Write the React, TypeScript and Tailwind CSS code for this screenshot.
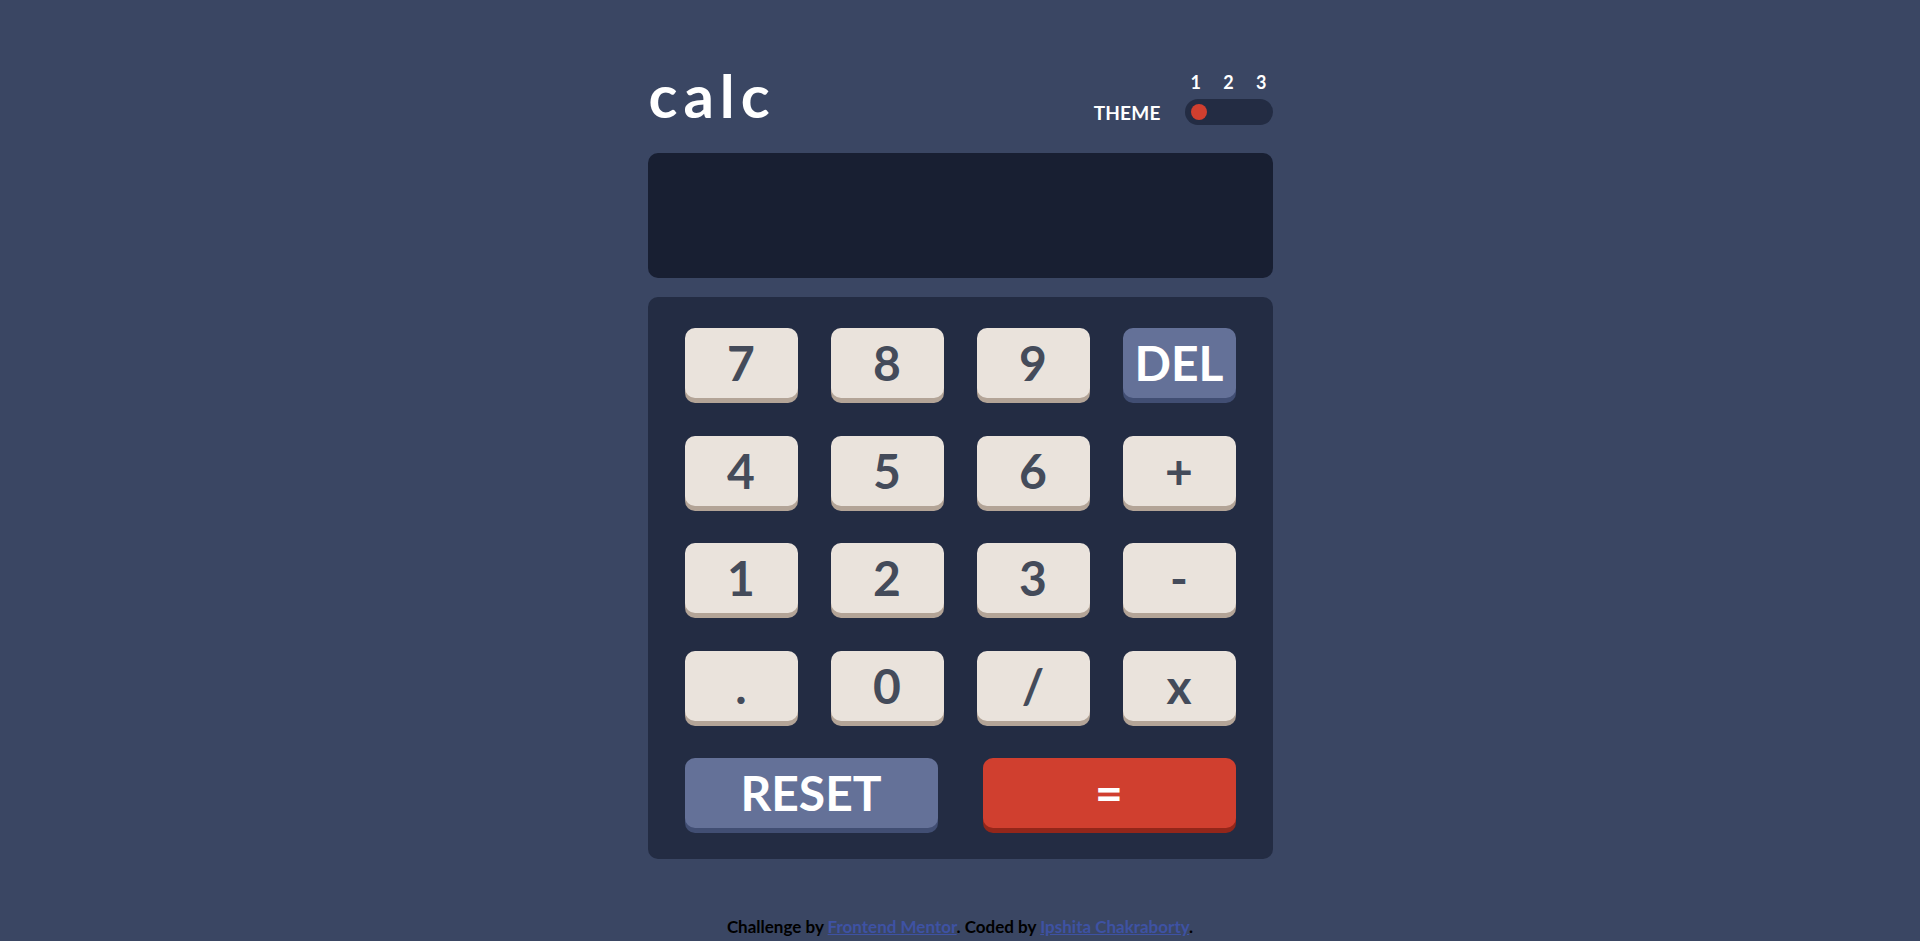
import { type ReactNode } from 'react';
import cx from 'clsx';

type Tone = 'plain' | 'muted' | 'accent';

const keys: { label: string; tone: Tone }[] = [
  { label: '7', tone: 'plain' },
  { label: '8', tone: 'plain' },
  { label: '9', tone: 'plain' },
  { label: 'DEL', tone: 'muted' },
  { label: '4', tone: 'plain' },
  { label: '5', tone: 'plain' },
  { label: '6', tone: 'plain' },
  { label: '+', tone: 'plain' },
  { label: '1', tone: 'plain' },
  { label: '2', tone: 'plain' },
  { label: '3', tone: 'plain' },
  { label: '-', tone: 'plain' },
  { label: '.', tone: 'plain' },
  { label: '0', tone: 'plain' },
  { label: '/', tone: 'plain' },
  { label: 'x', tone: 'plain' },
];

const toneClass: Record<Tone, string> = {
  plain: 'bg-[#eae3dc] text-[#444b5a] shadow-[0_5px_0_#b3a497]',
  muted: 'bg-[#647198] text-white shadow-[0_5px_0_#414e73]',
  accent: 'bg-[#d03f2f] text-white shadow-[0_5px_0_#93261a]',
};

const Key = ({ tone, children }: { tone: Tone; children: ReactNode }) => (
  <button
    type="button"
    className={cx(
      'flex h-[70px] items-center justify-center rounded-[10px] text-[48px] font-bold leading-none',
      toneClass[tone],
    )}
  >
    {children}
  </button>
);

const App = () => {
  return (
    <div className="flex min-h-screen flex-col items-center bg-[#3a4663] pt-[65px] font-['Lato','Noto_Sans',sans-serif]">
      <main className="w-[625px]">
        <header className="flex items-end justify-between">
          <h1 className="pl-[1px] text-[60px] font-bold leading-none tracking-[0.1em] text-white">
            calc
          </h1>

          <div className="flex items-end gap-[24px]">
            <span className="mb-[3px] text-[19px] font-bold leading-none tracking-[0.01em] text-white">
              THEME
            </span>
            <div className="flex w-[88px] flex-col">
              <div className="mb-[8px] flex justify-between px-[6px] text-[18px] font-bold leading-none text-white">
                <span>1</span>
                <span>2</span>
                <span>3</span>
              </div>
              <div className="flex h-[26px] items-center rounded-full bg-[#232c43] px-[6px]">
                <span className="h-4 w-4 rounded-full bg-[#d03f2f]" aria-hidden />
              </div>
            </div>
          </div>
        </header>

        <div className="mt-[28px] h-[125px] rounded-[10px] bg-[#181f32]" />

        <div className="mt-[19px] rounded-[10px] bg-[#232c43] px-[37px] py-[31px]">
          <div className="grid grid-cols-4 gap-x-[33px] gap-y-[37.6px]">
            {keys.map((k) => (
              <Key key={k.label} tone={k.tone}>
                {k.label}
              </Key>
            ))}
            <div className="col-span-4 grid grid-cols-2 gap-x-[45px]">
              <Key tone="muted">RESET</Key>
              <Key tone="accent">=</Key>
            </div>
          </div>
        </div>
      </main>

      <footer className="mt-[58px] text-center text-[17px] font-bold leading-[20px] text-black">
        Challenge by{' '}
        <a href="#" className="text-[#3e52a3] underline">
          Frontend Mentor
        </a>
        . Coded by{' '}
        <a href="#" className="text-[#3e52a3] underline">
          Ipshita Chakraborty
        </a>
        .
      </footer>
    </div>
  );
};

export default App;
